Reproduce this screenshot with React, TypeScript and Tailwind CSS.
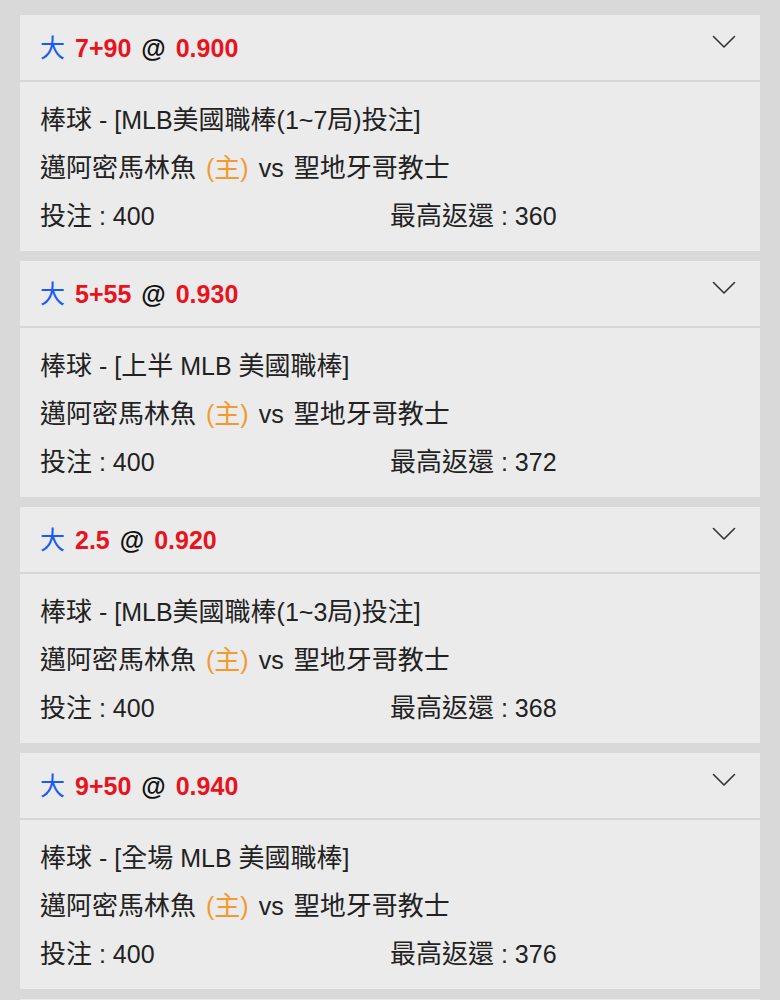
import React from "react";

type Bet = { line: string; odds: string; league: React.ReactNode; ret: string };

const C = ({ children }: { children: React.ReactNode }) => (
  <span className="text-[26px]" style={{ fontFamily: '"Noto Sans CJK TC", sans-serif' }}>
    {children}
  </span>
);

const bets: Bet[] = [
  {
    line: "7+90",
    odds: "0.900",
    league: (
      <>
        <C>棒球</C> - [MLB<C>美國職棒</C>(1~7<C>局</C>)<C>投注</C>]
      </>
    ),
    ret: "360",
  },
  {
    line: "5+55",
    odds: "0.930",
    league: (
      <>
        <C>棒球</C> - [<C>上半</C> MLB <C>美國職棒</C>]
      </>
    ),
    ret: "372",
  },
  {
    line: "2.5",
    odds: "0.920",
    league: (
      <>
        <C>棒球</C> - [MLB<C>美國職棒</C>(1~3<C>局</C>)<C>投注</C>]
      </>
    ),
    ret: "368",
  },
  {
    line: "9+50",
    odds: "0.940",
    league: (
      <>
        <C>棒球</C> - [<C>全場</C> MLB <C>美國職棒</C>]
      </>
    ),
    ret: "376",
  },
  {
    line: "7+90",
    odds: "0.900",
    league: (
      <>
        <C>棒球</C> - [MLB<C>美國職棒</C>(1~7<C>局</C>)<C>投注</C>]
      </>
    ),
    ret: "360",
  },
];

function Chevron() {
  return (
    <svg width="24" height="14" viewBox="0 0 24 14" fill="none" className="shrink-0">
      <path d="M1.5 1.5 L12 12 L22.5 1.5" stroke="#333" strokeWidth="1.6" strokeLinecap="round" strokeLinejoin="round" />
    </svg>
  );
}

function Card({ b }: { b: Bet }) {
  return (
    <div className="mx-[20px] shrink-0 bg-[#ebebeb]">
      <div className="flex h-[67px] items-center justify-between border-b-2 border-[#d6d6d6] pl-[20px] pr-[24px]">
        <div className="flex items-baseline gap-[10px] text-[25px] leading-none">
          <span className="text-[#1a5cf2]" style={{ fontFamily: '"Noto Sans CJK TC", sans-serif' }}>
            大
          </span>
          <span className="font-bold text-[#e8131c]">{b.line}</span>
          <span className="font-bold text-[#111]">@</span>
          <span className="font-bold text-[#e8131c]">{b.odds}</span>
        </div>
        <div className="-mt-[12px]">
          <Chevron />
        </div>
      </div>
      <div className="px-[20px] pb-[13px] pt-[12px] text-[25px] leading-[48px] text-[#222]">
        <div className="h-[48px] whitespace-nowrap">{b.league}</div>
        <div className="flex h-[48px] items-baseline gap-[10px] whitespace-nowrap">
          <C>邁阿密馬林魚</C>
          <span className="text-[#f39a2e]">
            (<C>主</C>)
          </span>
          <span>vs</span>
          <C>聖地牙哥教士</C>
        </div>
        <div className="grid h-[48px] grid-cols-2">
          <div className="whitespace-nowrap">
            <C>投注</C> : 400
          </div>
          <div className="whitespace-nowrap">
            <C>最高返還</C> : {b.ret}
          </div>
        </div>
      </div>
    </div>
  );
}

export default function App() {
  return (
    <div
      className="flex h-[1000px] flex-col gap-[10px] overflow-hidden bg-[#d9d9d9] pt-[15px]"
      style={{ fontFamily: '"Liberation Sans", "Noto Sans CJK TC", sans-serif' }}
    >
      {bets.map((b, i) => (
        <Card key={i} b={b} />
      ))}
    </div>
  );
}
